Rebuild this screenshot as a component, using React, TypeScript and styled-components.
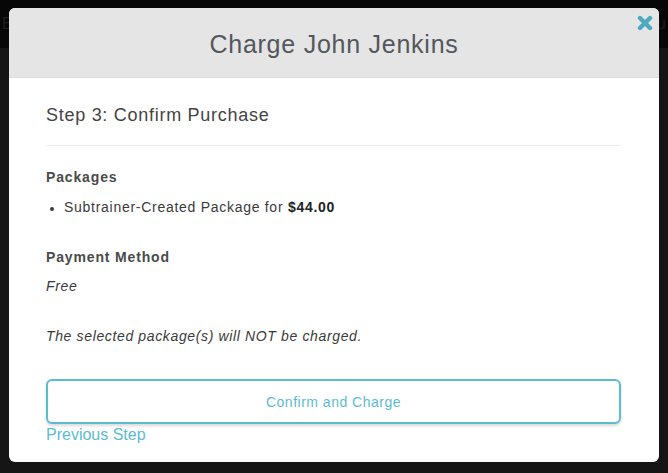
import React from "react";
import styled, { createGlobalStyle } from "styled-components";

const Global = createGlobalStyle`
  html, body { margin: 0; padding: 0; }
  body {
    background: #151515;
    font-family: "Liberation Sans", Arial, Helvetica, sans-serif;
    width: 668px;
    height: 473px;
    overflow: hidden;
  }
`;

const Page = styled.div`
  position: relative;
  width: 668px;
  height: 473px;
  background: #151515;
`;

const TopBar = styled.div`
  height: 48px;
  background: #070707;
  display: flex;
  align-items: center;
  justify-content: space-between;
  padding: 0 2px;
  color: #1e1e1e;
  font-size: 16px;
`;

const Modal = styled.div`
  position: absolute;
  left: 9px;
  top: 8px;
  width: 650px;
  height: 454px;
  background: #fff;
  border-radius: 6px;
  overflow: hidden;
  display: flex;
  flex-direction: column;
  letter-spacing: 0.72px;
`;

const Header = styled.div`
  position: relative;
  height: 69px;
  background: #e5e5e5;
  border-bottom: 1px solid #dcdcdc;
  display: flex;
  align-items: center;
  justify-content: center;
`;

const Title = styled.h1`
  margin: 0;
  font-weight: 400;
  font-size: 25px;
  letter-spacing: 0.75px;
  color: #53575c;
  line-height: 30px;
  padding-top: 2px;
`;

const Close = styled.button`
  position: absolute;
  top: 7px;
  right: 6px;
  width: 16px;
  height: 16px;
  padding: 0;
  border: none;
  background: transparent;
  display: flex;
  cursor: pointer;
`;

const Body = styled.div`
  padding: 27px 38px 0 37px;
  display: flex;
  flex-direction: column;
`;

const StepTitle = styled.h2`
  margin: 0;
  font-size: 18px;
  font-weight: 400;
  line-height: 20px;
  color: #444;
`;

const Rule = styled.hr`
  margin: 20px 0 0;
  border: none;
  border-top: 1px solid #ececec;
`;

const Label = styled.div<{ $gap: number }>`
  margin-top: ${(p) => p.$gap}px;
  font-size: 14px;
  font-weight: 700;
  line-height: 20px;
  color: #4a4a4a;
  letter-spacing: 0.85px;
`;

const List = styled.ul`
  margin: 10px 0 0;
  padding-left: 18px;
  font-size: 14px;
  line-height: 20px;
  color: #3a3a3a;
  li::marker { font-size: 12px; }
  b { color: #222; }
`;

const Italic = styled.div<{ $gap: number }>`
  margin-top: ${(p) => p.$gap}px;
  font-size: 14px;
  font-style: italic;
  line-height: 20px;
  color: #3a3a3a;
  letter-spacing: 0.64px;
`;

const ChargeButton = styled.button`
  margin-top: 33px;
  height: 45px;
  width: 100%;
  background: #fff;
  border: 2px solid #5bbcd1;
  border-radius: 6px;
  box-shadow: 0 2px 3px rgba(0, 0, 0, 0.15);
  color: #5bbcd1;
  font-family: "Liberation Sans", Arial, sans-serif;
  font-size: 14px;
  letter-spacing: 0.5px;
  cursor: pointer;
`;

const PrevLink = styled.a`
  margin-top: 1px;
  font-size: 16px;
  line-height: 20px;
  letter-spacing: 0;
  color: #5bbcd1;
  text-decoration: none;
  align-self: flex-start;
`;

export default function App() {
  return (
    <Page>
      <Global />
      <TopBar>
        <span>E</span>
        <span>ou</span>
      </TopBar>
      <Modal>
        <Header>
          <Title>Charge John Jenkins</Title>
          <Close aria-label="Close">
            <svg width="16" height="16" viewBox="0 0 16 16">
              <path
                d="M3 3 L13 13 M13 3 L3 13"
                stroke="#4da8c0"
                strokeWidth="4.4"
                strokeLinecap="round"
                fill="none"
              />
            </svg>
          </Close>
        </Header>
        <Body>
          <StepTitle>Step 3: Confirm Purchase</StepTitle>
          <Rule />
          <Label $gap={21}>Packages</Label>
          <List>
            <li>
              Subtrainer-Created Package for <b>$44.00</b>
            </li>
          </List>
          <Label $gap={30}>Payment Method</Label>
          <Italic $gap={9}>Free</Italic>
          <Italic $gap={30}>The selected package(s) will NOT be charged.</Italic>
          <ChargeButton>Confirm and Charge</ChargeButton>
          <PrevLink href="#">Previous Step</PrevLink>
        </Body>
      </Modal>
    </Page>
  );
}
